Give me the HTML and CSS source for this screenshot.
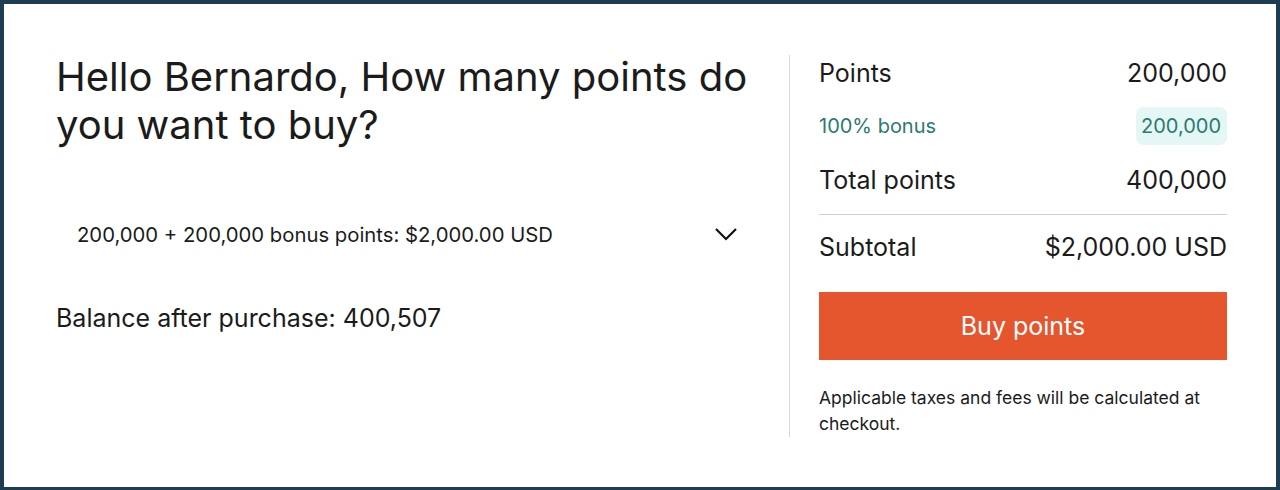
FILE: index.html
```html
<!DOCTYPE html>
<html lang="en">
<head>
    <meta charset="UTF-8">
    <meta name="viewport" content="width=device-width, initial-scale=1.0">
    <title>Buy Points</title>
    <link rel="stylesheet" href="styles.css">
</head>
<body>
    <main class="purchase">
        <!-- Left: choose amount -->
        <section class="choose">
            <h1 class="title">Hello Bernardo, How many points do you want to buy?</h1>

            <div class="select-row">
                <span class="select-value">200,000 + 200,000 bonus points: $2,000.00 USD</span>
                <svg class="chevron" width="24" height="14" viewBox="0 0 24 14">
                    <path d="M2 2 L12 12 L22 2" fill="none" stroke="#111" stroke-width="2.2"/>
                </svg>
            </div>

            <p class="balance">Balance after purchase: 400,507</p>
        </section>

        <div class="divider"></div>

        <!-- Right: summary -->
        <aside class="summary">
            <div class="row">
                <span>Points</span>
                <span>200,000</span>
            </div>
            <div class="row bonus">
                <span>100% bonus</span>
                <span class="badge">200,000</span>
            </div>
            <div class="row total">
                <span>Total points</span>
                <span>400,000</span>
            </div>
            <hr class="rule">
            <div class="row subtotal">
                <span>Subtotal</span>
                <span>$2,000.00 USD</span>
            </div>
            <button class="buy-button">Buy points</button>
            <p class="note">Applicable taxes and fees will be calculated at checkout.</p>
        </aside>
    </main>
</body>
</html>
```

FILE: styles.css
```css
html, body {
    height: 100%;
}
body {
    margin: 0;
    font-family: Inter, "Noto Sans", sans-serif;
    color: #1b1b1b;
    background-color: #fff;
    border: 4px solid #1f3d52;
    border-bottom-width: 3px;
    box-sizing: border-box;
}
.purchase {
    display: grid;
    grid-template-columns: 733px 1px 1fr;
    padding: 51px 49px 0 52px;
    align-items: start;
}
.choose {
    padding-right: 40px;
}
.title {
    margin: -2px 0 0;
    font-size: 40px;
    font-weight: 400;
    line-height: 48px;
}
.select-row {
    display: flex;
    align-items: center;
    justify-content: space-between;
    height: 56px;
    margin-top: 57px;
    padding: 0 11px 0 21px;
}
.select-value {
    font-size: 20.3px;
}
.chevron {
    display: block;
}
.balance {
    margin: 40px 0 0;
    font-size: 25px;
    line-height: 32px;
}
.divider {
    height: 382px;
    background-color: #d9d9d9;
}
.summary {
    margin-left: 29px;
    display: flex;
    flex-direction: column;
}
.row {
    display: flex;
    justify-content: space-between;
    align-items: center;
    font-size: 25px;
    line-height: 36px;
}
.bonus {
    margin-top: 16px;
    font-size: 20px;
    color: #2b7a70;
}
.badge {
    background-color: #e4f7f4;
    border-radius: 8px;
    padding: 0 6px 0 5px;
    line-height: 38px;
}
.total {
    margin-top: 17px;
}
.rule {
    margin: 16px 0 0;
    border: none;
    border-top: 1px solid #c9d1d1;
}
.subtotal {
    margin-top: 14px;
}
.buy-button {
    margin-top: 27px;
    height: 68px;
    border: none;
    background-color: #e5562f;
    color: #fff;
    font-family: inherit;
    font-size: 25px;
    cursor: pointer;
}
.note {
    margin: 25px 0 0;
    font-size: 17.5px;
    line-height: 26px;
}
```
